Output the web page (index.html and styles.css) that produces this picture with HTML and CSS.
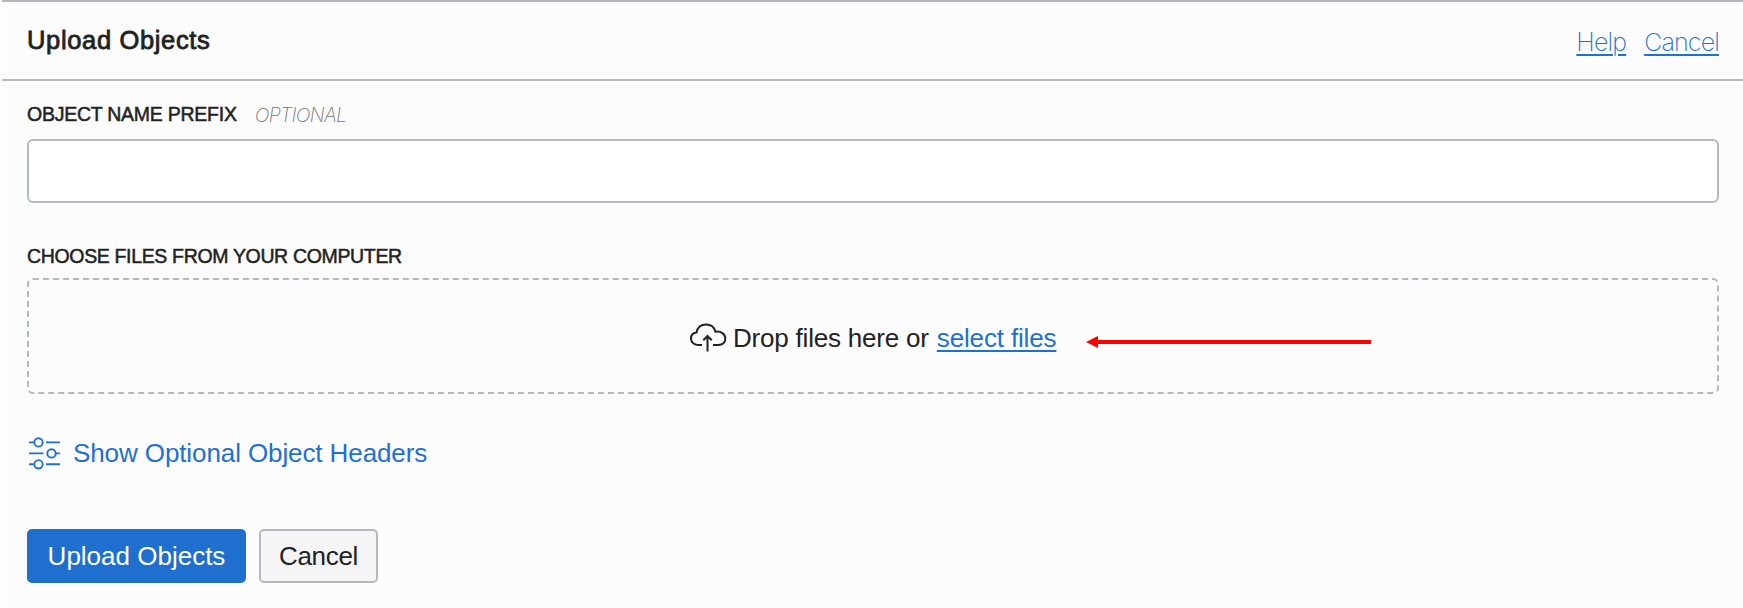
FILE: index.html
```html
<!DOCTYPE html>
<html lang="en">
<head>
<meta charset="utf-8">
<title>Upload Objects</title>
<link rel="stylesheet" href="styles.css">
</head>
<body>
<main class="panel">
  <header class="panel-header">
    <h1 class="title">Upload Objects</h1>
    <nav class="header-links"><a class="help" href="#">Help</a><a class="dismiss" href="#">Cancel</a></nav>
  </header>
  <form class="form">
    <label class="field-label" for="prefix"><span class="label-prefix">OBJECT NAME PREFIX</span><em class="optional">OPTIONAL</em></label>
    <input class="text-input" id="prefix" type="text">
    <div class="field-label files-label"><span class="label-files">CHOOSE FILES FROM YOUR COMPUTER</span></div>
    <div class="dropzone">
      <svg class="cloud" width="40" height="32" viewBox="0 0 40 32" fill="none" stroke="#222" stroke-width="2"><path d="M13 22H9.500C5.500 22 2 19.500 2 15.500C2 12 4.500 10 7.500 9.600C8.500 4.500 12 1.500 17 1.500C21.500 1.500 25.300 4.300 26.500 8.700C32 7.800 36.300 11 36.300 15.600C36.300 19.500 33.500 22 29.500 22H24"/><path d="M18.500 28.500V13M14.300 17.200L18.500 13L22.700 17.200"/></svg>
      <span class="drop-text">Drop files here or</span>
      <a class="select" href="#">select files</a>
      <svg class="arrow" width="286" height="14" viewBox="0 0 286 14" fill="#f00"><path d="M0 7L12 1V5H285V9H12V13Z"/></svg>
    </div>
    <a class="headers-toggle" href="#">
      <svg width="34" height="34" viewBox="0 0 34 34" fill="none" stroke="#1f70d0" stroke-width="1.9"><path d="M2 6.400H7M19 6.400H33M2 17.400H16.500M28 17.400H33M2 28.300H7M19 28.300H33"/><circle cx="11.500" cy="6.400" r="4.200"/><circle cx="24.500" cy="17.400" r="4.200"/><circle cx="11.500" cy="28.300" r="4.200"/></svg>
      <span class="toggle-text">Show Optional Object Headers</span>
    </a>
    <div class="actions">
      <button class="button primary" type="button"><span>Upload Objects</span></button>
      <button class="button secondary" type="button"><span>Cancel</span></button>
    </div>
  </form>
</main>
</body>
</html>
```
FILE: styles.css
```css
* { box-sizing: border-box; }
body { margin: 0; background: #fff; color: #222; font-family: "Liberation Sans", Arial, sans-serif; font-size: 26px; }
a { color: #1f70d0; }
.panel { margin-left: 2px; height: 608px; background: #fcfcfc; border-top: 2px solid #b3b8c2; }
.panel-header { display: flex; justify-content: space-between; height: 79px; padding: 0 24px 0 25px; border-bottom: 2px solid #b5bac4; }
.title { margin: 23px 0 0; font-size: 25.5px; line-height: 30px; font-weight: 400; letter-spacing: .65px; -webkit-text-stroke: .8px #222; }
.header-links { display: flex; gap: 18px; padding-top: 24px; font-family: Inter, sans-serif; font-weight: 200; font-size: 25px; line-height: 32px; letter-spacing: -.85px; }
.header-links a { text-decoration-thickness: 2px; text-underline-offset: 3px; }
.form { display: flex; flex-direction: column; padding: 21px 24px 0 25px; }
.field-label { display: flex; height: 37px; font-size: 19.5px; line-height: 25px; }
.label-prefix, .label-files { -webkit-text-stroke: .5px #222; letter-spacing: -.25px; }
.label-files { letter-spacing: -.34px; }
.optional { margin-left: 18px; padding-top: 1px; font-family: Inter, sans-serif; font-weight: 200; font-size: 19.5px; color: #777; letter-spacing: -.7px; }
.text-input { height: 64px; width: 100%; border: 2px solid #b3b9c3; border-radius: 6px; background: #fff; outline: none; }
.files-label { margin-top: 41px; height: 34px; }
.dropzone { position: relative; display: flex; height: 116px; border: 2px dashed #b3b9c3; border-radius: 6px; line-height: 32px; padding: 42px 0 0 660px; }
.cloud { margin: 1px 4px 0 0; }
.drop-text { margin-right: 8px; letter-spacing: -.2px; }
.select { letter-spacing: -.15px; text-decoration-thickness: 2px; text-underline-offset: 3px; }
.arrow { position: absolute; left: 1057px; top: 55px; }
.headers-toggle { display: flex; width: fit-content; margin-top: 42px; line-height: 34px; gap: 12px; text-decoration: none; letter-spacing: -.1px; }
.actions { display: flex; gap: 13px; margin-top: 59px; }
.button { height: 54px; border-radius: 5px; font: inherit; padding: 0; color: #222; }
.primary { width: 219px; border: 0; background: #1f70ce; color: #fff; }
.secondary { width: 119px; border: 2px solid #b3b9c3; background: #f5f5f5; letter-spacing: -.3px; }
```
